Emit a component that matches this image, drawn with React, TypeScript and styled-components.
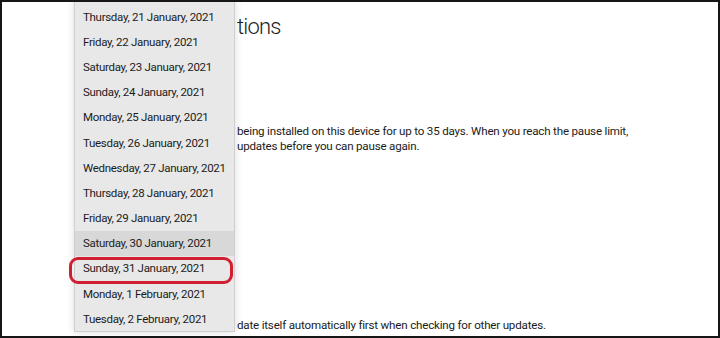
import React from "react";
import styled, { createGlobalStyle } from "styled-components";

const dates = [
  "Thursday, 21 January, 2021",
  "Friday, 22 January, 2021",
  "Saturday, 23 January, 2021",
  "Sunday, 24 January, 2021",
  "Monday, 25 January, 2021",
  "Tuesday, 26 January, 2021",
  "Wednesday, 27 January, 2021",
  "Thursday, 28 January, 2021",
  "Friday, 29 January, 2021",
  "Saturday, 30 January, 2021",
  "Sunday, 31 January, 2021",
  "Monday, 1 February, 2021",
  "Tuesday, 2 February, 2021",
];

const HOVERED = 9;
const MARKED = 10;

export default function App() {
  return (
    <>
      <GlobalStyle />
      <Frame>
        <Content>
          <Title>tions</Title>
          <Paragraph $top={83}>
            <span>being installed on this device for up to 35 days. When you reach the pause limit,</span>
            <span>updates before you can pause again.</span>
          </Paragraph>
          <Spacer />
          <Paragraph $top={0}>
            <span>date itself automatically first when checking for other updates.</span>
          </Paragraph>
        </Content>
        <DateList>
          {dates.map((d, i) => (
            <DateRow key={d} $hovered={i === HOVERED}>
              {d}
              {i === MARKED && <Marker />}
            </DateRow>
          ))}
        </DateList>
      </Frame>
    </>
  );
}

const GlobalStyle = createGlobalStyle`
  html, body {
    margin: 0;
    padding: 0;
    background: #ffffff;
  }
  body {
    font-family: Roboto, "Noto Sans", sans-serif;
    color: #1b1b1b;
  }
`;

const Frame = styled.div`
  position: relative;
  box-sizing: border-box;
  width: 720px;
  height: 338px;
  border: 2px solid #161616;
  background: #ffffff;
  overflow: hidden;
`;

const Content = styled.div`
  display: flex;
  flex-direction: column;
  height: 100%;
  padding: 0 0 3px 235px;
  box-sizing: border-box;
`;

const Title = styled.div`
  margin-top: 11px;
  font-size: 22px;
  font-weight: 300;
  letter-spacing: -0.8px;
  line-height: 28px;
  color: #1b1b1b;
`;

const Paragraph = styled.div<{ $top: number }>`
  display: flex;
  flex-direction: column;
  margin-top: ${(p) => p.$top}px;
  font-size: 11.6px;
  letter-spacing: -0.2px;
  line-height: 15px;
  color: #1b1b1b;
`;

const Spacer = styled.div`
  flex: 1;
`;

const DateList = styled.div`
  position: absolute;
  left: 72px;
  top: -2px;
  width: 159px;
  padding-top: 3px;
  background: #e8e8e8;
  border: 1px solid #cfcfcf;
  box-shadow: 0 0 8px rgba(0, 0, 0, 0.14);
  display: flex;
  flex-direction: column;
`;

const DateRow = styled.div<{ $hovered: boolean }>`
  position: relative;
  height: 25.2px;
  display: flex;
  align-items: center;
  padding-left: 8px;
  font-size: 11.5px;
  letter-spacing: -0.3px;
  white-space: nowrap;
  color: #1b1b1b;
  background: ${(p) => (p.$hovered ? "#d8d8d8" : "transparent")};
`;

const Marker = styled.span`
  position: absolute;
  left: -6px;
  right: 1px;
  top: 1px;
  bottom: -3px;
  border: 3px solid #d01f2f;
  border-radius: 9px;
`;
